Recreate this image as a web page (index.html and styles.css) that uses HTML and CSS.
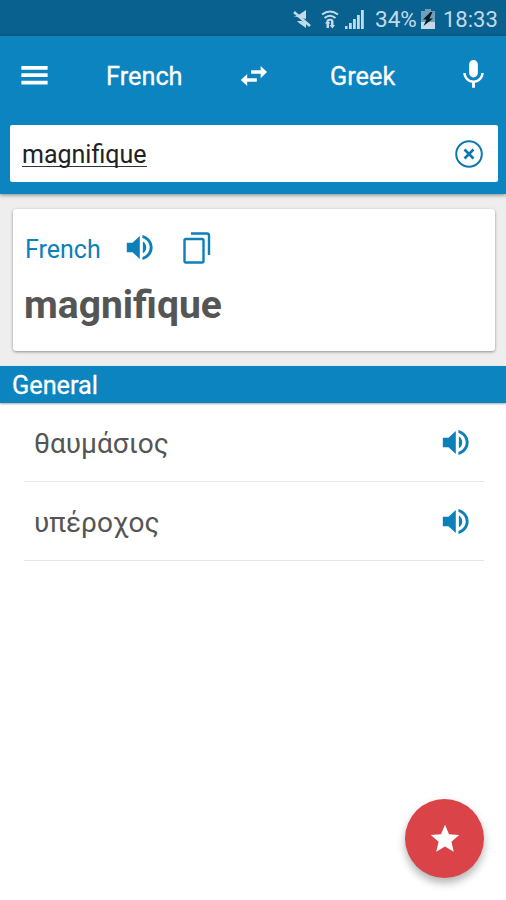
FILE: index.html
```html
<!DOCTYPE html>
<html lang="en">
<head>
<meta charset="utf-8">
<title>French - Greek dictionary</title>
<link rel="stylesheet" href="styles.css">
</head>
<body>
<svg class="defs" width="0" height="0">
  <symbol id="volume" viewBox="0 0 24 24"><path d="M3.300 8.800v6.400h3.900l5 4.700V4.100l-5 4.700H3.300zM16.600 12c0-1.770-.8-3.290-2.300-4.030v8.050c1.500-.73 2.300-2.250 2.300-4.020zM14 3.500v2.060c2.890.86 5 3.440 5 6.440s-2.110 5.580-5 6.440v2.060c4.010-.91 7-4.290 7-8.500s-2.990-7.590-7-8.500z"/></symbol>
</svg>
<div class="status">
  <svg class="mute" viewBox="0 0 20 20"><path d="M1 7h4l9-6v9zM5 12h5l4 2v5l-7-5z"/><path d="M2 3l16 14" stroke="currentColor" stroke-width="2.600"/></svg>
  <svg class="wifi" viewBox="0 0 18 20"><g fill="none" stroke="currentColor" stroke-width="2"><path d="M1 5.500q8-6 16 0M3.500 9q5.500-4.500 11 0M6 11.800q3-2.200 6 0"/></g><path d="M6.500 11l3 3.500H8V19H5.500v-4.500H4zM11.500 19.500l-3-3.500H10v-4h2.500v4H14z"/></svg>
  <svg class="signal" viewBox="0 0 20 19"><path d="M0 16h2.500v3H0zM4 13h2.800v6H4zM8 9h2.800v10H8zM12 5h2.800v14H12zM16 0h2.800v19H16z"/></svg>
  <span class="percent">34%</span>
  <svg class="battery" viewBox="0 0 14 20"><path fill="#6f9fb9" d="M4 0h6v2h4v11H0V2h4z"/><path d="M0 13h14v7H0z"/><path fill="#071c28" d="M9.500 3L2 10.500h3.500l-3 6.500 9.500-7.500H8.500L11.500 3z"/></svg>
  <span class="time">18:33</span>
</div>
<header class="header">
  <nav class="toolbar">
    <svg class="menu" viewBox="0 0 24 24"><path d="M3 18.200h18v-2.600H3v2.600zm0-5.100h18v-2.600H3v2.600zM3 5.400V8h18V5.400H3z"/></svg>
    <span class="lang from">French</span>
    <svg class="swap" viewBox="0 0 24 24"><path d="M7.200 10.500L2.700 14.800l4.500 4.300v-3.100H14v-2.400H7.200v-3.100zM21.200 9.200l-4.500-4.300V8H10v2.400h6.700v3.100l4.500-4.300z"/></svg>
    <span class="lang to">Greek</span>
    <svg class="mic" viewBox="0 0 24 24"><path d="M12 14c1.660 0 2.990-1.340 2.990-3L15 5c0-1.660-1.340-3-3-3S9 3.340 9 5v6c0 1.660 1.340 3 3 3zm5.300-3c0 3-2.540 5.100-5.300 5.100S6.700 14 6.700 11H5c0 3.410 2.720 6.230 6 6.720V21h2v-3.280c3.280-.48 6-3.300 6-6.720h-1.700z"/></svg>
  </nav>
  <div class="search">
    <span class="query">magnifique</span>
    <svg class="clear" viewBox="0 0 28 28"><circle cx="14" cy="14" r="12.800"/><path class="cross" d="M9.500 9.500l9 9m0-9l-9 9"/></svg>
  </div>
</header>
<main>
  <section class="source">
    <article class="card">
      <div class="tools">
        <span class="name">French</span>
        <svg class="volume"><use href="#volume"/></svg>
        <svg class="copy" viewBox="0 0 28 32"><rect x="1.500" y="7" width="19" height="23.500" rx="1.500"/><path d="M8 1.500h16q2 0 2 2V23"/></svg>
      </div>
      <h1>magnifique</h1>
    </article>
  </section>
  <h2>General</h2>
  <ul>
    <li><span>θαυμάσιος</span><svg class="volume"><use href="#volume"/></svg></li>
    <li><span>υπέροχος</span><svg class="volume"><use href="#volume"/></svg></li>
  </ul>
</main>
<button class="fab" aria-label="Favourite"><svg viewBox="0 0 24 24"><path d="M12 17.270L18.180 21l-1.640-7.030L22 9.240l-7.190-.61L12 2 9.190 8.630 2 9.240l5.460 4.730L5.820 21z"/></svg></button>
</body>
</html>
```
FILE: styles.css
```css
* { box-sizing: border-box; }
body {
  margin: 0;
  height: 900px;
  overflow: hidden;
  background: #fff;
  font-family: Roboto, "Noto Sans", sans-serif;
}
svg { display: block; flex: none; fill: currentColor; }
.defs { position: absolute; }

.status {
  display: flex;
  align-items: center;
  height: 36px;
  padding: 2px 8px 0 292px;
  background: #08618e;
  color: #c3dbe8;
  font-size: 22.500px;
}
.mute { width: 20px; height: 20px; margin-right: 9px; }
.wifi { width: 18px; height: 20px; margin-right: 6px; }
.signal { width: 20px; height: 19px; margin-right: 10px; }
.percent { width: 46px; }
.battery { width: 14px; height: 20px; margin-right: 8px; }
.time { font-size: 22px; }

.header {
  position: relative;
  height: 158px;
  background: #0b84bf;
  box-shadow: 0 1px 4px rgba(0, 0, 0, .45);
}
.toolbar {
  display: flex;
  align-items: center;
  height: 89px;
  padding: 0 15px 10px 17px;
  color: #fff;
}
.menu { width: 35px; height: 35px; }
.lang {
  padding-top: 1px;
  font-size: 25.300px;
  line-height: 35px;
  -webkit-text-stroke: .3px currentColor;
}
.from { width: 131px; margin-left: 54px; }
.swap { width: 34px; height: 34px; }
.to { width: 126px; margin-left: 59px; }
.mic { width: 35px; height: 35px; margin-top: -2px; }
.search {
  display: flex;
  align-items: center;
  justify-content: space-between;
  height: 57px;
  margin: 0 8px 0 10px;
  padding: 0 15px 0 12px;
  border-radius: 2px;
  background: #fff;
}
.query {
  height: 26px;
  border-bottom: 1px solid #333;
  color: #222;
  font-size: 25px;
  line-height: 28px;
}
.clear { width: 28px; height: 28px; fill: none; stroke: #0b78b3; stroke-width: 2; }
.cross { stroke-width: 2.600; }

.source { height: 172px; padding: 15px 11px 0 13px; background: #eee; }
.card {
  height: 142px;
  padding: 19px 12px;
  border-radius: 3px;
  background: #fff;
  box-shadow: 0 1px 3px rgba(0, 0, 0, .4);
}
.tools { display: flex; align-items: center; height: 39px; color: #0b80b9; }
.name { width: 97px; padding-top: 3px; font-size: 25px; }
.volume { width: 35px; height: 35px; color: #0b80b9; }
.copy { width: 28px; height: 32px; margin-left: 26px; fill: none; stroke: currentColor; stroke-width: 2.400; }
h1 { margin: 14px 0 0 -1px; color: #555; font-size: 39px; line-height: 48px; }
h2 {
  height: 37px;
  margin: 0;
  padding-left: 12px;
  background: #0b84bf;
  box-shadow: 0 1px 2px rgba(0, 0, 0, .35);
  color: #fff;
  font-size: 25.300px;
  font-weight: 400;
  line-height: 39px;
  -webkit-text-stroke: .3px currentColor;
}
ul { margin: 0; padding: 0 22px 0 24px; list-style: none; }
li {
  display: flex;
  align-items: center;
  justify-content: space-between;
  height: 79px;
  padding: 0 11px 0 10px;
  border-bottom: 1px solid #e6e6e6;
  color: #555;
  font-size: 28px;
}
li span { padding-top: 2px; }

.fab {
  position: absolute;
  top: 799px;
  left: 405px;
  display: grid;
  place-items: center;
  width: 79px;
  height: 79px;
  padding: 0;
  border: 0;
  border-radius: 50%;
  background: #da4448;
  box-shadow: 0 5px 9px rgba(0, 0, 0, .3);
  color: #fff;
}
.fab svg { width: 34px; height: 34px; }
```
